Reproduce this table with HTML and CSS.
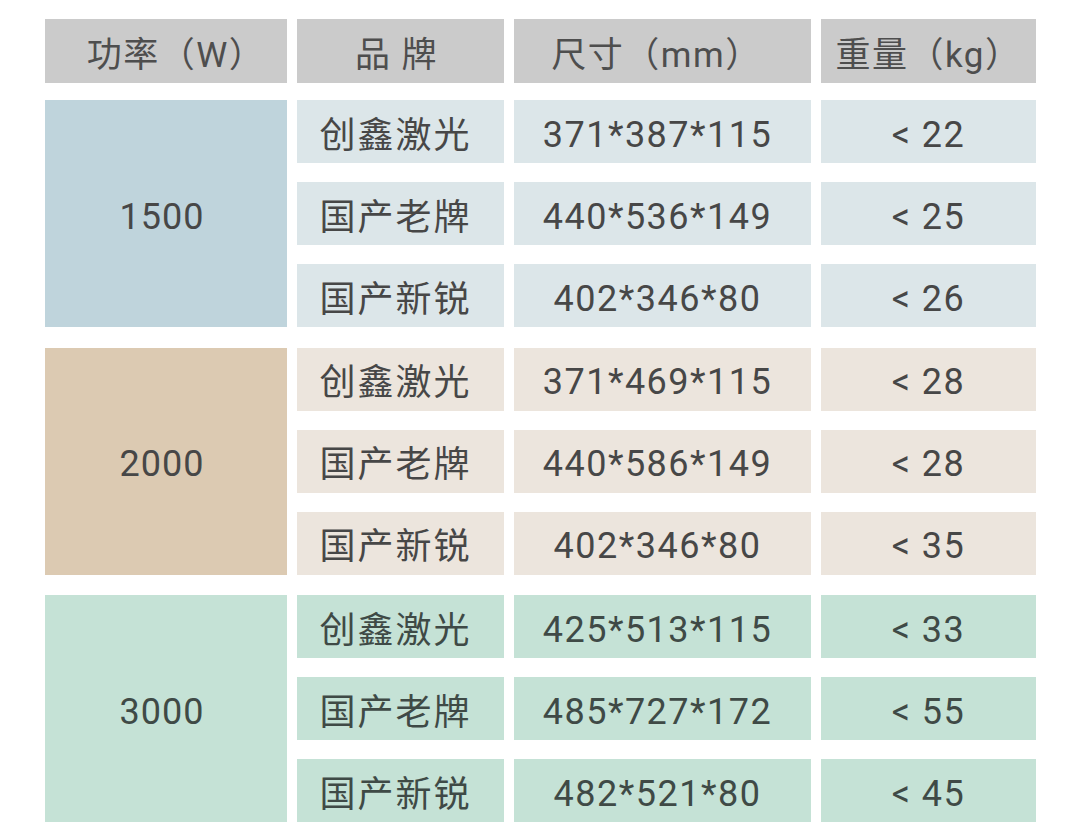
FILE: index.html
```html
<!DOCTYPE html>
<html lang="zh">
<head>
<meta charset="utf-8">
<title>功率对比表</title>
<link rel="stylesheet" href="styles.css">
</head>
<body>
<div class="table">
  <div class="row head">
    <div class="cell power-h">功率（W）</div>
    <div class="cell brand">品 牌</div>
    <div class="cell size">尺寸（mm）</div>
    <div class="cell">重量（kg）</div>
  </div>

  <div class="group g1">
    <div class="cell power">1500</div>
    <div class="cell brand">创鑫激光</div><div class="cell num size">371*387*115</div><div class="cell num">&lt; 22</div>
    <div class="cell brand">国产老牌</div><div class="cell num size">440*536*149</div><div class="cell num">&lt; 25</div>
    <div class="cell brand">国产新锐</div><div class="cell num size">402*346*80</div><div class="cell num">&lt; 26</div>
  </div>

  <div class="group g2">
    <div class="cell power">2000</div>
    <div class="cell brand">创鑫激光</div><div class="cell num size">371*469*115</div><div class="cell num">&lt; 28</div>
    <div class="cell brand">国产老牌</div><div class="cell num size">440*586*149</div><div class="cell num">&lt; 28</div>
    <div class="cell brand">国产新锐</div><div class="cell num size">402*346*80</div><div class="cell num">&lt; 35</div>
  </div>

  <div class="group g3">
    <div class="cell power">3000</div>
    <div class="cell brand">创鑫激光</div><div class="cell num size">425*513*115</div><div class="cell num">&lt; 33</div>
    <div class="cell brand">国产老牌</div><div class="cell num size">485*727*172</div><div class="cell num">&lt; 55</div>
    <div class="cell brand">国产新锐</div><div class="cell num size">482*521*80</div><div class="cell num">&lt; 45</div>
  </div>
</div>
</body>
</html>
```

FILE: styles.css
```css
html, body {
  margin: 0;
  padding: 0;
  background: #ffffff;
}

body {
  font-family: Roboto, "Noto Sans CJK SC", sans-serif;
  color: #474747;
}

.table {
  display: flex;
  flex-direction: column;
  padding: 19px 0 0 45px;
}

.row,
.group {
  display: grid;
  grid-template-columns: 242px 207px 297px 215px;
  column-gap: 10px;
}

.head {
  height: 64px;
  margin-bottom: 17px;
}

.cell {
  display: flex;
  align-items: center;
  justify-content: center;
  font-size: 36px;
  line-height: 1;
  padding-top: 8px;
}

.head .cell {
  background: #cbcbcb;
  font-size: 35px;
  letter-spacing: 1.5px;
  color: #4e4e4e;
  padding-top: 8px;
}

.head .power-h {
  padding-left: 20px;
}

.head .brand {
  padding-right: 8px;
}

.head .size {
  padding-right: 12px;
}

.group {
  grid-template-rows: repeat(3, 63px);
  row-gap: 19px;
  margin-bottom: 20.5px;
}

.brand {
  letter-spacing: 2px;
  padding-right: 10px;
}

.num {
  letter-spacing: 1.5px;
  padding-top: 6px;
}

.size {
  padding-right: 10px;
}

.power {
  grid-row: span 3;
  letter-spacing: 1px;
  padding-right: 8px;
  padding-top: 6px;
}

.g1 .cell { background: #dce6e9; }
.g1 .power { background: #bfd4dc; }

.g2 .cell { background: #ece5dd; }
.g2 .power { background: #dccab2; }

.g3 .cell { background: #c5e2d6; color: #3f4a46; }
.g3 .power { background: #c5e2d6; }
```
